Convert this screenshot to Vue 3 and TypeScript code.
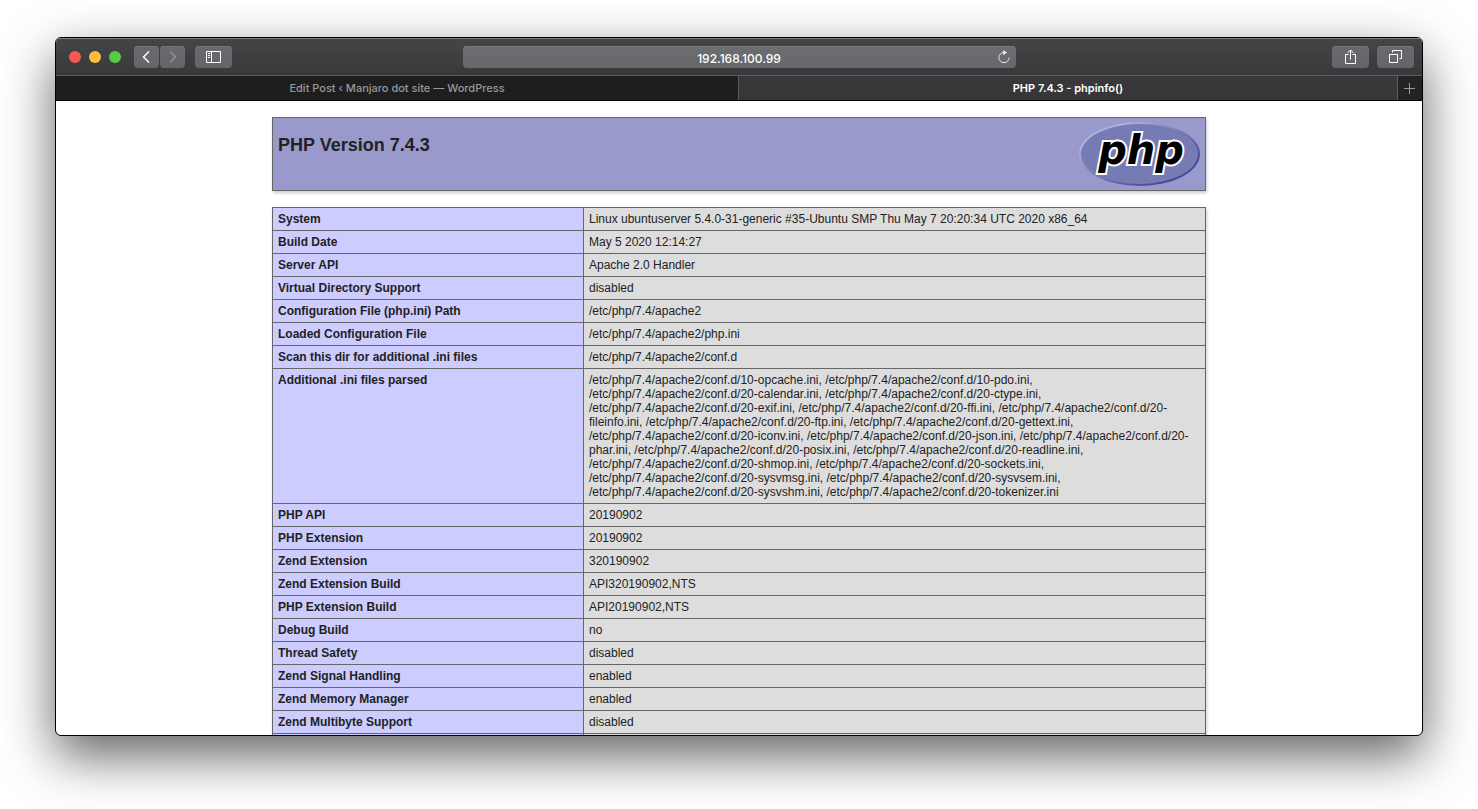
<script setup lang="ts">
interface InfoRow {
  label: string
  value: string
}

const address = '192.168.100.99'

const rows: InfoRow[] = [
  { label: 'System', value: 'Linux ubuntuserver 5.4.0-31-generic #35-Ubuntu SMP Thu May 7 20:20:34 UTC 2020 x86_64' },
  { label: 'Build Date', value: 'May 5 2020 12:14:27' },
  { label: 'Server API', value: 'Apache 2.0 Handler' },
  { label: 'Virtual Directory Support', value: 'disabled' },
  { label: 'Configuration File (php.ini) Path', value: '/etc/php/7.4/apache2' },
  { label: 'Loaded Configuration File', value: '/etc/php/7.4/apache2/php.ini' },
  { label: 'Scan this dir for additional .ini files', value: '/etc/php/7.4/apache2/conf.d' },
  {
    label: 'Additional .ini files parsed',
    value: [
      '10-opcache', '10-pdo', '20-calendar', '20-ctype', '20-exif', '20-ffi', '20-fileinfo',
      '20-ftp', '20-gettext', '20-iconv', '20-json', '20-phar', '20-posix', '20-readline',
      '20-shmop', '20-sockets', '20-sysvmsg', '20-sysvsem', '20-sysvshm', '20-tokenizer',
    ].map((name) => `/etc/php/7.4/apache2/conf.d/${name}.ini`).join(', '),
  },
  { label: 'PHP API', value: '20190902' },
  { label: 'PHP Extension', value: '20190902' },
  { label: 'Zend Extension', value: '320190902' },
  { label: 'Zend Extension Build', value: 'API320190902,NTS' },
  { label: 'PHP Extension Build', value: 'API20190902,NTS' },
  { label: 'Debug Build', value: 'no' },
  { label: 'Thread Safety', value: 'disabled' },
  { label: 'Zend Signal Handling', value: 'enabled' },
  { label: 'Zend Memory Manager', value: 'enabled' },
  { label: 'Zend Multibyte Support', value: 'disabled' },
  { label: '', value: '' },
]
</script>

<template>
  <div class="desktop">
    <div class="window">
      <header class="toolbar">
        <div class="tools">
          <div class="lights">
            <button class="light close" aria-label="Close"></button>
            <button class="light minimise" aria-label="Minimise"></button>
            <button class="light zoom" aria-label="Zoom"></button>
          </div>
          <div class="nav">
            <button class="tool narrow" aria-label="Back">
              <svg width="9" height="14" viewBox="0 0 9 14"><path d="M7 1.500 1.500 7l5.500 5.500" /></svg>
            </button>
            <button class="tool narrow dim" aria-label="Forward">
              <svg width="9" height="14" viewBox="0 0 9 14"><path d="M2 1.500 7.500 7 2 12.500" /></svg>
            </button>
          </div>
          <button class="tool" aria-label="Sidebar">
            <svg class="fine" width="15" height="12" viewBox="0 0 15 12">
              <path d="M.5.5h14v11H.5zM5.500.5v11M2 2.500h2M2 4.500h2M2 6.500h2" />
            </svg>
          </button>
        </div>
        <div class="address">
          <input type="text" aria-label="Address" :value="address" />
          <button class="reload" aria-label="Reload">
            <svg width="14" height="14" viewBox="0 0 14 14">
              <path d="M7 2.500A5.100 5.100 0 1 0 12.100 7.600" />
              <path class="head" d="M6.200 0v5.200L10.200 2.600z" />
            </svg>
          </button>
        </div>
        <div class="tools end">
          <button class="tool" aria-label="Share">
            <svg class="fine" width="11" height="16" viewBox="0 0 11 16">
              <path d="M3.500 5.500h-3v9h10v-9h-3M5.500 10.500V1M2.500 4l3-3 3 3" />
            </svg>
          </button>
          <button class="tool" aria-label="Tab overview">
            <svg class="fine" width="13" height="14" viewBox="0 0 13 14">
              <path d="M.5 4.500h8v8h-8zM3.500 2.500v-2h9v8h-2" />
            </svg>
          </button>
        </div>
      </header>
      <nav class="tabs">
        <button class="tab first">Edit Post ‹ Manjaro dot site — WordPress</button>
        <button class="tab active">PHP 7.4.3 - phpinfo()</button>
        <button class="add" aria-label="New tab">
          <svg width="12" height="11" viewBox="0 0 12 11"><path d="M5.500 0v11M0 5.500h11" /></svg>
        </button>
      </nav>
      <main class="page">
        <section class="banner">
          <h1>PHP Version 7.4.3</h1>
          <a href="http://www.php.net/" aria-label="PHP">
            <svg class="logo" width="121" height="64" viewBox="0 0 121 64">
              <defs>
                <linearGradient id="rim" x1="0" y1="0" x2="1" y2="1">
                  <stop offset="0.2" stop-color="#aeb2dc" />
                  <stop offset="0.5" stop-color="#777bb3" />
                  <stop offset="0.8" stop-color="#484893" />
                </linearGradient>
              </defs>
              <ellipse cx="60.500" cy="32" rx="60.500" ry="32" fill="url(#rim)" />
              <ellipse cx="60.500" cy="32" rx="58.500" ry="30" fill="#777bb3" />
              <text x="62" y="42" text-anchor="middle">php</text>
            </svg>
          </a>
        </section>
        <table class="info">
          <tbody>
            <tr v-for="row in rows" :key="row.label">
              <th scope="row">{{ row.label }}</th>
              <td>{{ row.value }}</td>
            </tr>
          </tbody>
        </table>
      </main>
    </div>
  </div>
</template>

<style>
body {
  margin: 0;
  background: #fff;
}
</style>

<style scoped>
* {
  box-sizing: border-box;
}

button {
  margin: 0;
  padding: 0;
  border: 0;
  background: none;
  font: inherit;
  color: inherit;
}

.desktop {
  display: flex;
  height: 100vh;
  padding: 37px 55px 73px;
  overflow: hidden;
  font-family: Inter, "Liberation Sans", sans-serif;
}

.window {
  flex: 1;
  display: flex;
  flex-direction: column;
  min-width: 0;
  overflow: hidden;
  border: 1px solid #000;
  border-radius: 6px;
  background: #fff;
  box-shadow: 0 20px 52px rgba(0, 0, 0, 0.62);
}

.toolbar {
  flex: none;
  display: grid;
  grid-template-columns: 1fr minmax(0, 553px) 1fr;
  align-items: center;
  height: 38px;
  padding: 0 8px;
  border-top: 1px solid #7b7d7e;
  border-bottom: 1px solid #5c5d5f;
  background: linear-gradient(#434547, #38393b);
}

.tools {
  display: flex;
  align-items: center;
}

.tools.end {
  justify-content: flex-end;
  gap: 8px;
}

.lights {
  display: flex;
  gap: 8px;
  margin: 0 13px 0 5px;
}

.light {
  width: 12px;
  height: 12px;
  border-radius: 50%;
}

.close {
  background: #fc5753;
}

.minimise {
  background: #fdbc40;
}

.zoom {
  background: #57cb43;
}

.nav {
  display: flex;
  gap: 1px;
  margin-right: 10px;
}

.tool {
  display: flex;
  align-items: center;
  justify-content: center;
  width: 37px;
  height: 22px;
  border-radius: 4px;
  background: linear-gradient(#696a6d, #646568);
  box-shadow: inset 0 1px 0 #757678;
}

.narrow {
  width: 25px;
}

svg {
  display: block;
  fill: none;
  stroke: #fff;
  stroke-width: 1.5;
}

.fine {
  stroke-width: 1;
}

.dim svg {
  stroke: #909194;
}

.address {
  position: relative;
}

.address input {
  display: block;
  width: 100%;
  height: 22px;
  padding: 2px 24px 0;
  border: 0;
  border-radius: 4px;
  background: linear-gradient(#6c6e70, #66676a);
  box-shadow: inset 0 1px 0 #777879;
  font: 500 12px/20px Inter, "Liberation Sans", sans-serif;
  text-align: center;
  color: #fff;
}

.reload {
  position: absolute;
  top: 4px;
  right: 5px;
}

.reload svg {
  stroke: #e6e6e6;
  stroke-width: 1;
}

.reload .head {
  fill: #e6e6e6;
  stroke: none;
}

.tabs {
  flex: none;
  display: flex;
  height: 25px;
  border-bottom: 1px solid #000;
  background: #1e1e1f;
  font-size: 11px;
  color: #98999b;
}

.tab {
  flex: 1;
  min-width: 0;
  border-right: 1px solid #5c5d5f;
  font-weight: 500;
}

.tab.first {
  flex: 0 0 50%;
}

.tab.active {
  background: linear-gradient(#39393b, #353638);
  font-weight: 600;
  color: #fff;
}

.add {
  display: flex;
  align-items: center;
  justify-content: center;
  width: 24px;
  background: #232325;
}

.add svg {
  stroke: #98999b;
  stroke-width: 1;
}

.page {
  flex: 1;
  min-height: 0;
  overflow: hidden;
  padding: 16px;
  color: #222;
  font-family: "Liberation Sans", Arial, sans-serif;
}

.banner,
.info {
  width: 100%;
  max-width: 934px;
  margin: 0 auto 16px;
  box-shadow: 1px 2px 3px #ccc;
}

.banner {
  display: flex;
  justify-content: space-between;
  padding: 4px 5px;
  border: 1px solid #666;
  background: #9999cc;
}

.banner h1 {
  margin: 0;
  font-size: 18px;
  line-height: 46px;
}

.logo ellipse {
  stroke: none;
}

.logo text {
  fill: #000;
  stroke: #fff;
  stroke-width: 4;
  stroke-linejoin: miter;
  paint-order: stroke;
  font: italic bold 40px "DejaVu Sans", sans-serif;
}

.info {
  border-collapse: collapse;
  font-size: 12px;
  line-height: 14px;
}

.info th,
.info td {
  height: 23px;
  padding: 4px 5px;
  border: 1px solid #666;
  vertical-align: top;
  text-align: left;
}

.info th {
  width: 311px;
  background: #ccccff;
}

.info td {
  background: #ddd;
  overflow-wrap: break-word;
}
</style>
